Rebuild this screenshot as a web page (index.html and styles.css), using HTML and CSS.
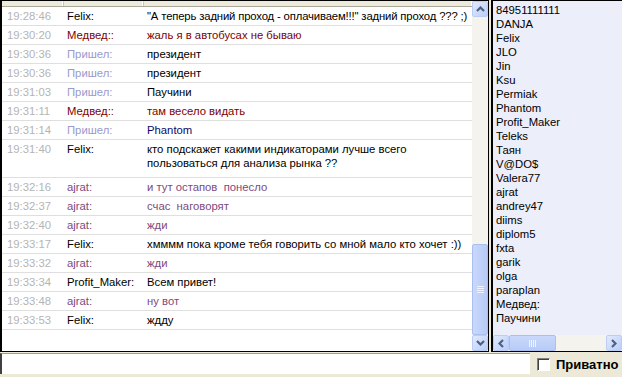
FILE: index.html
```
<!DOCTYPE html>
<html>
<head>
	<meta charset="utf-8">
	<title>Чат</title>
	<link rel="stylesheet" href="styles.css">
</head>
<body>

	<div class="main">

		<div class="chat">
			<div class="list">
				<div class="head"><span></span><span></span><span></span></div>

				<div class="row"><span class="time">19:28:46</span><span>Felix:</span><span class="msg tight">"А теперь задний проход - оплачиваем!!!" задний проход ??? ;)</span></div>
				<div class="row red"><span class="time">19:30:20</span><span>Медвед::</span><span class="msg">жаль я в автобусах не бываю</span></div>
				<div class="row"><span class="time">19:30:36</span><span class="came">Пришел:</span><span class="msg">президент</span></div>
				<div class="row"><span class="time">19:30:36</span><span class="came">Пришел:</span><span class="msg">президент</span></div>
				<div class="row"><span class="time">19:31:03</span><span class="came">Пришел:</span><span class="msg">Паучини</span></div>
				<div class="row red"><span class="time">19:31:11</span><span>Медвед::</span><span class="msg">там весело видать</span></div>
				<div class="row"><span class="time">19:31:14</span><span class="came">Пришел:</span><span class="msg navy">Phantom</span></div>
				<div class="row tall"><span class="time">19:31:40</span><span>Felix:</span><span class="msg">кто подскажет какими индикаторами лучше всего<br>пользоваться для анализа рынка ??</span></div>
				<div class="row purple"><span class="time">19:32:16</span><span>ajrat:</span><span class="msg">и тут остапов&nbsp; понесло</span></div>
				<div class="row purple"><span class="time">19:32:37</span><span>ajrat:</span><span class="msg">счас&nbsp; наговорят</span></div>
				<div class="row purple"><span class="time">19:32:40</span><span>ajrat:</span><span class="msg">жди</span></div>
				<div class="row"><span class="time">19:33:17</span><span>Felix:</span><span class="msg">хмммм пока кроме тебя говорить со мной мало кто хочет :))</span></div>
				<div class="row purple"><span class="time">19:33:32</span><span>ajrat:</span><span class="msg">жди</span></div>
				<div class="row"><span class="time">19:33:34</span><span>Profit_Maker:</span><span class="msg">Всем привет!</span></div>
				<div class="row purple"><span class="time">19:33:48</span><span>ajrat:</span><span class="msg">ну вот</span></div>
				<div class="row"><span class="time">19:33:53</span><span>Felix:</span><span class="msg">ждду</span></div>
			</div>

			<div class="vscroll">
				<div class="btn"><svg width="9" height="6" viewBox="0 0 9 6"><path d="M1 5 L4.5 1.5 L8 5" fill="none" stroke="#4d6185" stroke-width="2.2"/></svg></div>
				<div class="track"></div>
				<div class="thumb v"><i></i><i></i><i></i><i></i></div>
				<div class="btn"><svg width="9" height="6" viewBox="0 0 9 6"><path d="M1 1 L4.5 4.5 L8 1" fill="none" stroke="#4d6185" stroke-width="2.2"/></svg></div>
			</div>
		</div>

		<div class="users">
			<div class="names">
				<div>84951111111</div>
				<div>DANJA</div>
				<div>Felix</div>
				<div>JLO</div>
				<div>Jin</div>
				<div>Ksu</div>
				<div>Permiak</div>
				<div>Phantom</div>
				<div>Profit_Maker</div>
				<div>Teleks</div>
				<div>Таян</div>
				<div>V@DO$</div>
				<div>Valera77</div>
				<div>ajrat</div>
				<div>andrey47</div>
				<div>diims</div>
				<div>diplom5</div>
				<div>fxta</div>
				<div>garik</div>
				<div>olga</div>
				<div>paraplan</div>
				<div>Медвед:</div>
				<div>Паучини</div>
			</div>

			<div class="hscroll">
				<div class="btn"><svg width="6" height="9" viewBox="0 0 6 9"><path d="M5 1 L1.5 4.5 L5 8" fill="none" stroke="#4d6185" stroke-width="2.2"/></svg></div>
				<div class="thumb h"><i></i><i></i><i></i><i></i></div>
				<div class="track"></div>
				<div class="btn"><svg width="6" height="9" viewBox="0 0 6 9"><path d="M1 1 L4.5 4.5 L1 8" fill="none" stroke="#4d6185" stroke-width="2.2"/></svg></div>
			</div>
		</div>

	</div>

	<div class="bar">
		<div class="input"></div>
		<label class="priv"><span class="box"></span>Приватно</label>
	</div>

</body>
</html>
```

FILE: styles.css
```
* {
	box-sizing: border-box;
}

body {
	margin: 0;
	width: 622px;
	height: 377px;
	overflow: hidden;
	background: #ece9d8;
	font-family: "Liberation Sans", "DejaVu Sans", sans-serif;
	font-size: 11.3px;
	color: #000;
}

.main {
	display: flex;
	height: 352px;
}

/* chat window */

.chat {
	width: 489px;
	display: flex;
	background: #fff;
	border: 1px solid #000;
	border-left-width: 2px;
}

.list {
	flex: 1;
	min-width: 0;
	overflow: hidden;
}

.head {
	height: 6px;
	display: grid;
	grid-template-columns: 61px 80px 1fr;
	background: #ebeadb;
	border-bottom: 1px solid #aca899;
}

.head span {
	border-right: 1px solid #fff;
	box-shadow: 1px 0 0 #cbc7b8;
}

.row {
	display: grid;
	grid-template-columns: 61px 80px 1fr;
	height: 19px;
	line-height: 18px;
	border-bottom: 1px solid #dfdfdf;
}

.row span {
	padding-left: 4px;
	white-space: nowrap;
	overflow: hidden;
}

.row .time {
	padding-left: 5px;
}

.row .tight {
	letter-spacing: -0.15px;
}

.row.tall {
	height: 38px;
	line-height: 14px;
	padding-top: 2px;
}

.time {
	color: #b4b4b4;
}

.came {
	color: #9a9acb;
}

.red {
	color: #800000;
}

.purple {
	color: #7e4a7e;
}

.navy {
	color: #0a0a6a;
}

/* scrollbars */

.vscroll {
	width: 16px;
	display: flex;
	flex-direction: column;
	background: #f4f3ee;
}

.hscroll {
	height: 16px;
	display: flex;
	background: #f4f3ee;
}

.btn {
	width: 16px;
	height: 16px;
	flex: none;
	display: flex;
	align-items: center;
	justify-content: center;
	background: linear-gradient(135deg, #e2ebfd, #b9cdf8);
	border: 1px solid #bccdf5;
	border-radius: 2px;
}

.track {
	flex: 1;
}

.thumb {
	display: flex;
	align-items: center;
	justify-content: center;
	gap: 1px;
	background: linear-gradient(90deg, #c9d8fc, #b8cbf6);
	border: 1px solid #a9bff0;
	border-radius: 2px;
}

.thumb.v {
	height: 91px;
	flex-direction: column;
}

.thumb.v i {
	width: 7px;
	height: 1px;
	background: #eef3fe;
}

.thumb.h {
	width: 47px;
	background: linear-gradient(180deg, #c9d8fc, #b8cbf6);
}

.thumb.h i {
	width: 1px;
	height: 7px;
	background: #eef3fe;
}

/* user list */

.users {
	flex: 1;
	margin-left: 2px;
	display: flex;
	flex-direction: column;
	background: #eceefa;
	border-top: 1px solid #000;
	border-bottom: 1px solid #000;
	border-left: 2px solid #000;
}

.names {
	flex: 1;
	padding: 2px 0 0 3px;
	line-height: 14px;
}

/* bottom line */

.bar {
	display: flex;
	height: 25px;
}

.input {
	width: 530px;
	height: 21px;
	margin-top: 1px;
	background: #fff;
	border-top: 1px solid #9d9d9d;
	border-left: 2px solid #404040;
}

.priv {
	display: flex;
	align-items: center;
	gap: 6px;
	margin: 6px 0 0 7px;
	height: 13px;
	font-size: 13px;
	font-weight: 700;
}

.box {
	width: 13px;
	height: 13px;
	background: #fff;
	border: 1px solid;
	border-color: #808080 #fff #fff #808080;
	box-shadow: inset 1px 1px 0 #404040;
}
```
